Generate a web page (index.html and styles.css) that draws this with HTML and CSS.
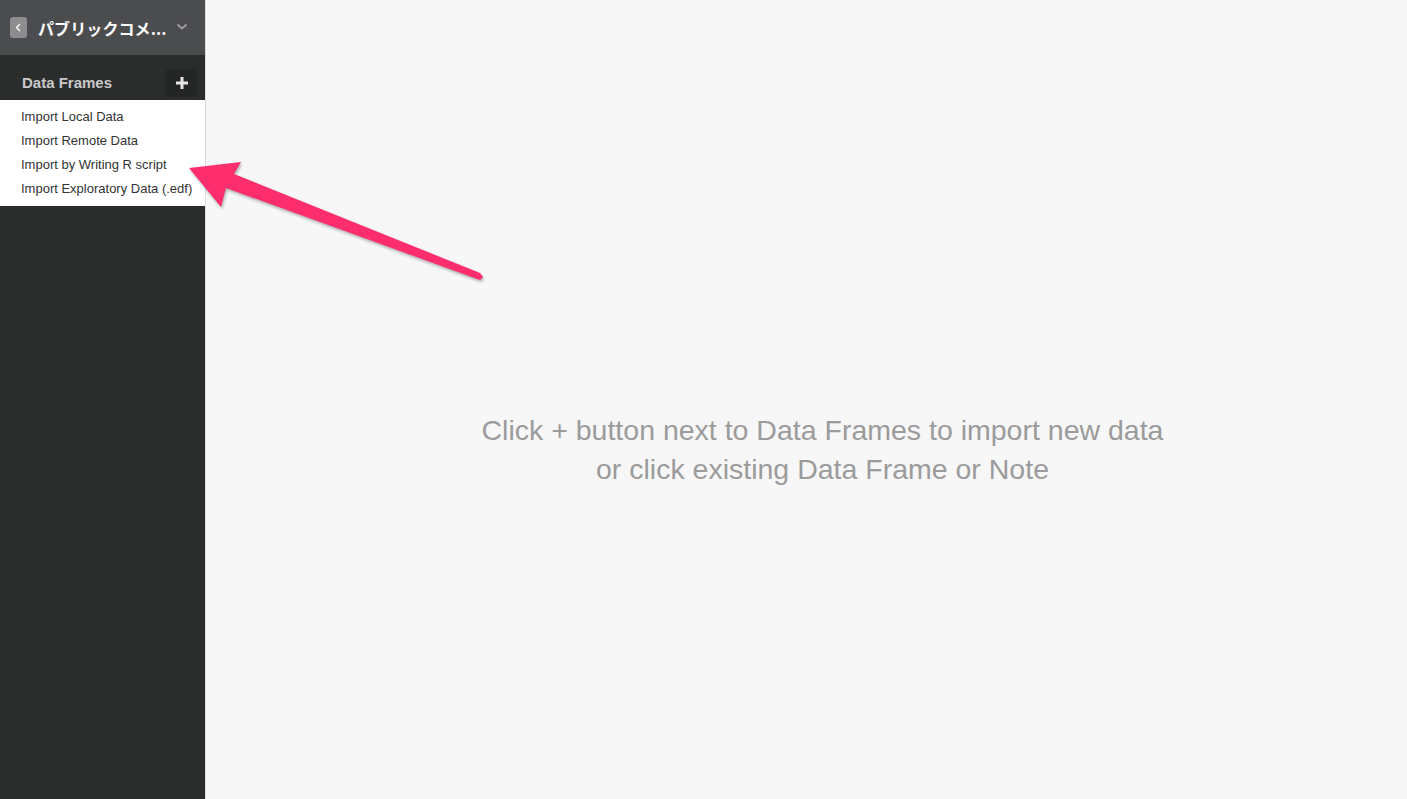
FILE: index.html
```html
<!DOCTYPE html>
<html lang="ja">
<head>
<meta charset="utf-8">
<title>Exploratory</title>
<link rel="stylesheet" href="styles.css">
</head>
<body>
<div class="app">
  <aside class="sidebar">
    <div class="project-header">
      <span class="back-btn">
        <svg width="17" height="21" viewBox="0 0 17 21"><path d="M10 7 L6.5 10.5 L10 14" fill="none" stroke="#fff" stroke-width="1.4"/></svg>
      </span>
      <span class="project-title">パブリックコメ...</span>
      <svg class="caret" width="12" height="8" viewBox="0 0 12 8"><path d="M1.5 1.5 L6 5.5 L10.5 1.5" fill="none" stroke="#9a9b9d" stroke-width="2"/></svg>
    </div>
    <div class="section-head">
      <span class="section-title">Data Frames</span>
      <span class="add-btn">
        <svg width="14" height="14" viewBox="0 0 14 14"><path d="M7 1 V13 M1 7 H13" stroke="#e6e6e6" stroke-width="3"/></svg>
      </span>
    </div>
    <ul class="import-menu">
      <li>Import Local Data</li>
      <li>Import Remote Data</li>
      <li>Import by Writing R script</li>
      <li>Import Exploratory Data (.edf)</li>
    </ul>
  </aside>
  <main class="main">
    <p class="empty-msg">Click + button next to Data Frames to import new data<br>or click existing Data Frame or Note</p>
  </main>
</div>
<svg class="annotation" width="1407" height="799" viewBox="0 0 1407 799">
  <polygon points="189,168 241,162 234,174 480,273 483,277 480,280 226,188 221,207" fill="#fe2d6e"/>
</svg>
</body>
</html>
```
FILE: styles.css
```css
html, body {
  margin: 0;
  padding: 0;
  height: 100%;
}
body {
  font-family: "Liberation Sans", Arial, "Noto Sans CJK JP", sans-serif;
  background: #f7f7f7;
  overflow: hidden;
}
.app {
  display: flex;
  height: 799px;
}
.sidebar {
  width: 205px;
  flex: 0 0 205px;
  background: #2b2d2d;
  border-right: 1px solid #dcdcdc;
  display: flex;
  flex-direction: column;
}
.project-header {
  height: 55px;
  background: #4b4c4e;
  display: flex;
  align-items: center;
  padding-left: 10px;
  box-sizing: border-box;
}
.back-btn {
  width: 17px;
  height: 21px;
  background: #8d8d8f;
  border-radius: 3px;
  display: flex;
  margin-top: -1px;
}
.project-title {
  margin-left: 11px;
  color: #ffffff;
  font-family: "Noto Sans CJK JP", sans-serif;
  font-weight: 700;
  font-size: 16px;
  letter-spacing: 0.1px;
  width: 128px;
  white-space: nowrap;
}
.caret {
  margin-left: 10px;
  margin-top: -1px;
}
.section-head {
  height: 45px;
  display: flex;
  align-items: flex-end;
  justify-content: space-between;
  padding: 0 8px 3px 22px;
  box-sizing: border-box;
}
.section-title {
  color: #c9c9c9;
  font-weight: 700;
  font-size: 15px;
  padding-bottom: 6px;
}
.add-btn {
  width: 31px;
  height: 28px;
  background: #242626;
  border-radius: 2px;
  display: flex;
  align-items: center;
  justify-content: center;
}
.import-menu {
  list-style: none;
  margin: 0;
  padding: 5px 0 5px;
  background: #ffffff;
}
.import-menu li {
  height: 24px;
  line-height: 24px;
  padding-left: 21px;
  font-size: 13px;
  color: #333333;
  white-space: nowrap;
}
.main {
  flex: 1;
  display: flex;
  align-items: center;
  justify-content: center;
  padding: 100px 0 0 32px;
  box-sizing: border-box;
}
.empty-msg {
  margin: 0;
  text-align: center;
  color: #9b9b9b;
  font-size: 28.5px;
  line-height: 39px;
}
.annotation {
  position: absolute;
  left: 0;
  top: 0;
  pointer-events: none;
  filter: drop-shadow(1px 2px 1.5px rgba(0, 0, 0, 0.3));
}
```
